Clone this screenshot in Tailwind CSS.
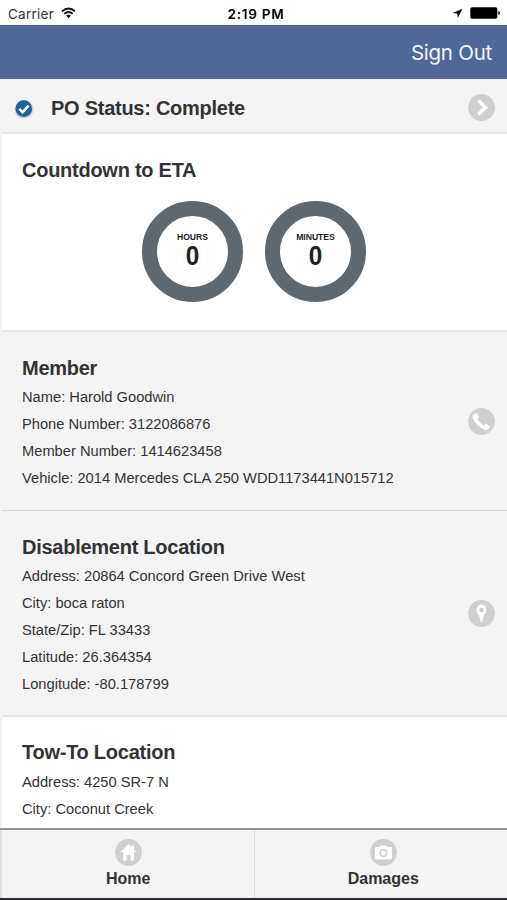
<!DOCTYPE html>
<html lang="en">
<head>
<meta charset="utf-8">
<title>PO Status</title>
<script src="https://cdn.jsdelivr.net/npm/@tailwindcss/browser@4"></script>
</head>
<body class="w-[507px] h-[900px] overflow-hidden bg-white text-[#333] font-['Liberation_Sans',Arial,sans-serif]">
<div class="flex flex-col h-[900px]">
  <div class="h-[25px] shrink-0 grid grid-cols-3 items-center pl-[8px] pr-[7px] pt-[3px] font-[Inter,sans-serif] text-[13.5px] leading-[20px] text-black">
    <div class="flex items-center gap-[7px] text-[#333]"><span class="tracking-[0.25px]">Carrier</span>
      <svg class="w-[15px] h-[12px] mt-[-2px]" viewBox="0 0 15 12" fill="none" stroke="#111" stroke-width="1.8"><path d="M1 4.3Q7.5-1.2 14 4.3M3.3 6.8Q7.5 3.2 11.7 6.8"/><path d="M5 8.6Q7.5 6.7 10 8.6L7.5 11.3Z" fill="#111" stroke="none"/></svg>
    </div>
    <div class="text-center font-semibold whitespace-nowrap tracking-[0.75px] pl-[4px]">2:19 PM</div>
    <div class="flex items-center justify-end gap-[7px]">
      <svg class="w-[11px] h-[11px] mt-[-2px]" viewBox="0 0 11 11"><path d="M10.5.7 5.8 10 5.3 5.7.6 5Z" fill="#111"/></svg>
      <svg class="w-[30px] h-[12px] mt-[-2px]" viewBox="0 0 30 12"><rect x=".3" y=".3" width="27" height="11.4" rx="1.8"/><path d="M28.3 4Q30 4.5 30 6T28.3 8Z"/></svg>
    </div>
  </div>
  <header class="h-[54px] shrink-0 bg-[#4f6897] border-t border-[#435e92] flex items-center justify-end pr-[15px] pt-[2px] text-[#f1f5ff] text-[20.5px] tracking-[-0.25px] font-[Inter,sans-serif]"><span>Sign Out</span></header>
  <main class="flex-1 min-h-0 overflow-hidden border-l-2 border-[#f4f4f4]">
    <section class="h-[55px] bg-[#f4f4f4] border-b-2 border-[#e4e4e4] flex items-center pl-[12px] pr-[12px]">
      <svg class="w-[20px] h-[20px] mt-[6px]" viewBox="0 0 19 19"><circle cx="9.5" cy="9.8" r="9" fill="#d2d2d2"/><circle cx="9.3" cy="9.2" r="7.9" fill="#1c63a0"/><path d="m5 9.4 3.2 3.1 5.7-6.2" fill="none" stroke="#fff" stroke-width="2.5"/></svg>
      <h2 class="ml-[17px] mt-[5px] text-[20px] tracking-[-0.26px] font-bold leading-[24px] flex-1">PO Status: Complete</h2>
      <svg class="w-[27px] h-[27px] mt-[4px]" viewBox="0 0 27 27"><circle cx="13.5" cy="13.5" r="13.4" fill="#cfcfcf"/><path d="m10.5 6.5 6.8 7-6.8 7" fill="none" stroke="#fff" stroke-width="3.8"/></svg>
    </section>
    <section class="h-[198px] border-b-2 border-[#e4e4e4] pl-[20px] pt-[24px]">
      <h2 class="text-[20px] tracking-[-0.26px] font-bold leading-[24px]">Countdown to ETA</h2>
      <div class="flex gap-[22px] ml-[120px] mt-[19px]">
        <div class="size-[101px] rounded-full border-[15px] border-[#5f686e] flex flex-col items-center pt-[15px] text-[#222] font-bold"><span class="text-[8.6px] leading-[12px]">HOURS</span><span class="text-[27px] leading-[28px] -mt-px scale-x-90">0</span></div>
        <div class="size-[101px] rounded-full border-[15px] border-[#5f686e] flex flex-col items-center pt-[15px] text-[#222] font-bold"><span class="text-[8.6px] leading-[12px]">MINUTES</span><span class="text-[27px] leading-[28px] -mt-px scale-x-90">0</span></div>
      </div>
    </section>
    <section class="h-[179px] bg-[#f4f4f4] border-b border-[#d8d8d8] flex items-center pl-[20px] pr-[12px]">
      <div class="flex-1 pt-[2px] text-[14.68px] leading-[27.1px] whitespace-nowrap">
        <h2 class="text-[20px] tracking-[-0.26px] font-bold leading-[32px]">Member</h2>
        <p>Name: Harold Goodwin</p><p>Phone Number: 3122086876</p><p>Member Number: 1414623458</p><p>Vehicle: 2014 Mercedes CLA 250 WDD1173441N015712</p>
      </div>
      <svg class="w-[27px] h-[27px]" viewBox="0 0 27 27"><circle cx="13.5" cy="13.5" r="13.4" fill="#cfcfcf"/><path d="M5 7.2 7.4 5Q8.4 4.6 9 5.6L11 8.6Q11.3 9.4 10.5 10L9.4 11Q11.8 15 15.8 17.5L17 16.3Q17.7 15.6 18.5 16L21.5 17.8Q22.3 18.4 21.7 19.3L20 21.6Q18.5 22.4 16 21.4 7.6 17.5 4.9 10.5 4.2 8.4 5 7.2Z" fill="#fff"/></svg>
    </section>
    <section class="h-[206px] bg-[#f4f4f4] border-b-2 border-[#e4e4e4] flex items-center pl-[20px] pr-[12px]">
      <div class="flex-1 pt-[3px] text-[14.68px] leading-[27.1px] whitespace-nowrap">
        <h2 class="text-[20px] tracking-[-0.26px] font-bold leading-[32px]">Disablement Location</h2>
        <p class="pt-[0.5px]">Address: 20864 Concord Green Drive West</p><p>City: boca raton</p><p>State/Zip: FL 33433</p><p>Latitude: 26.364354</p><p>Longitude: -80.178799</p>
      </div>
      <svg class="w-[27px] h-[27px]" viewBox="0 0 27 27"><circle cx="13.5" cy="13.5" r="13.4" fill="#cfcfcf"/><path d="M13.5 4.8C10.6 4.8 8.7 6.9 8.7 9.6 8.7 13.3 12.3 16.5 12.7 21.7Q13.5 22.7 14.3 21.7C14.7 16.5 18.3 13.3 18.3 9.6 18.3 6.9 16.4 4.8 13.5 4.8Z" fill="#fff"/><circle cx="13.5" cy="10" r="2.3" fill="#cfcfcf"/></svg>
    </section>
    <section class="pl-[20px] pt-[19px] text-[14.68px] leading-[27px]">
      <h2 class="text-[20px] tracking-[-0.26px] font-bold leading-[32px] pb-px">Tow-To Location</h2>
      <p>Address: 4250 SR-7 N</p><p>City: Coconut Creek</p>
    </section>
  </main>
  <footer class="h-[72px] shrink-0 grid grid-cols-2 bg-[#f4f4f4] border-t-2 border-t-[#929292] border-b-2 border-b-[#2d2d31] text-[16px] font-bold leading-[20px]">
    <div class="flex flex-col items-center pt-[9px] border-l-2 border-r border-[#dedede] -mr-px pl-px">
      <svg class="w-[27px] h-[27px]" viewBox="0 0 27 27"><circle cx="13.5" cy="13.5" r="13.4" fill="#cfcfcf"/><path d="M13.5 5 5.5 13H8V21.5H11.5V16.3H15.5V21.5H19V13H21.5L19 10.5V6.5H16.5V8Z" fill="#fff"/></svg>
      <span class="mt-[3px]">Home</span>
    </div>
    <div class="flex flex-col items-center pt-[9px] pl-[6px]">
      <svg class="w-[27px] h-[27px]" viewBox="0 0 27 27"><circle cx="13.5" cy="13.5" r="13.4" fill="#cfcfcf"/><path d="M6 8H9.5L10.5 6.6H16.5L17.5 8H21Q22 8 22 9V19.5Q22 20.5 21 20.5H6Q5 20.5 5 19.5V9Q5 8 6 8Z" fill="#fff"/><circle cx="13.5" cy="14" r="3.2" fill="none" stroke="#cfcfcf" stroke-width="1.4"/></svg>
      <span class="mt-[3px]">Damages</span>
    </div>
  </footer>
</div>
</body>
</html>
